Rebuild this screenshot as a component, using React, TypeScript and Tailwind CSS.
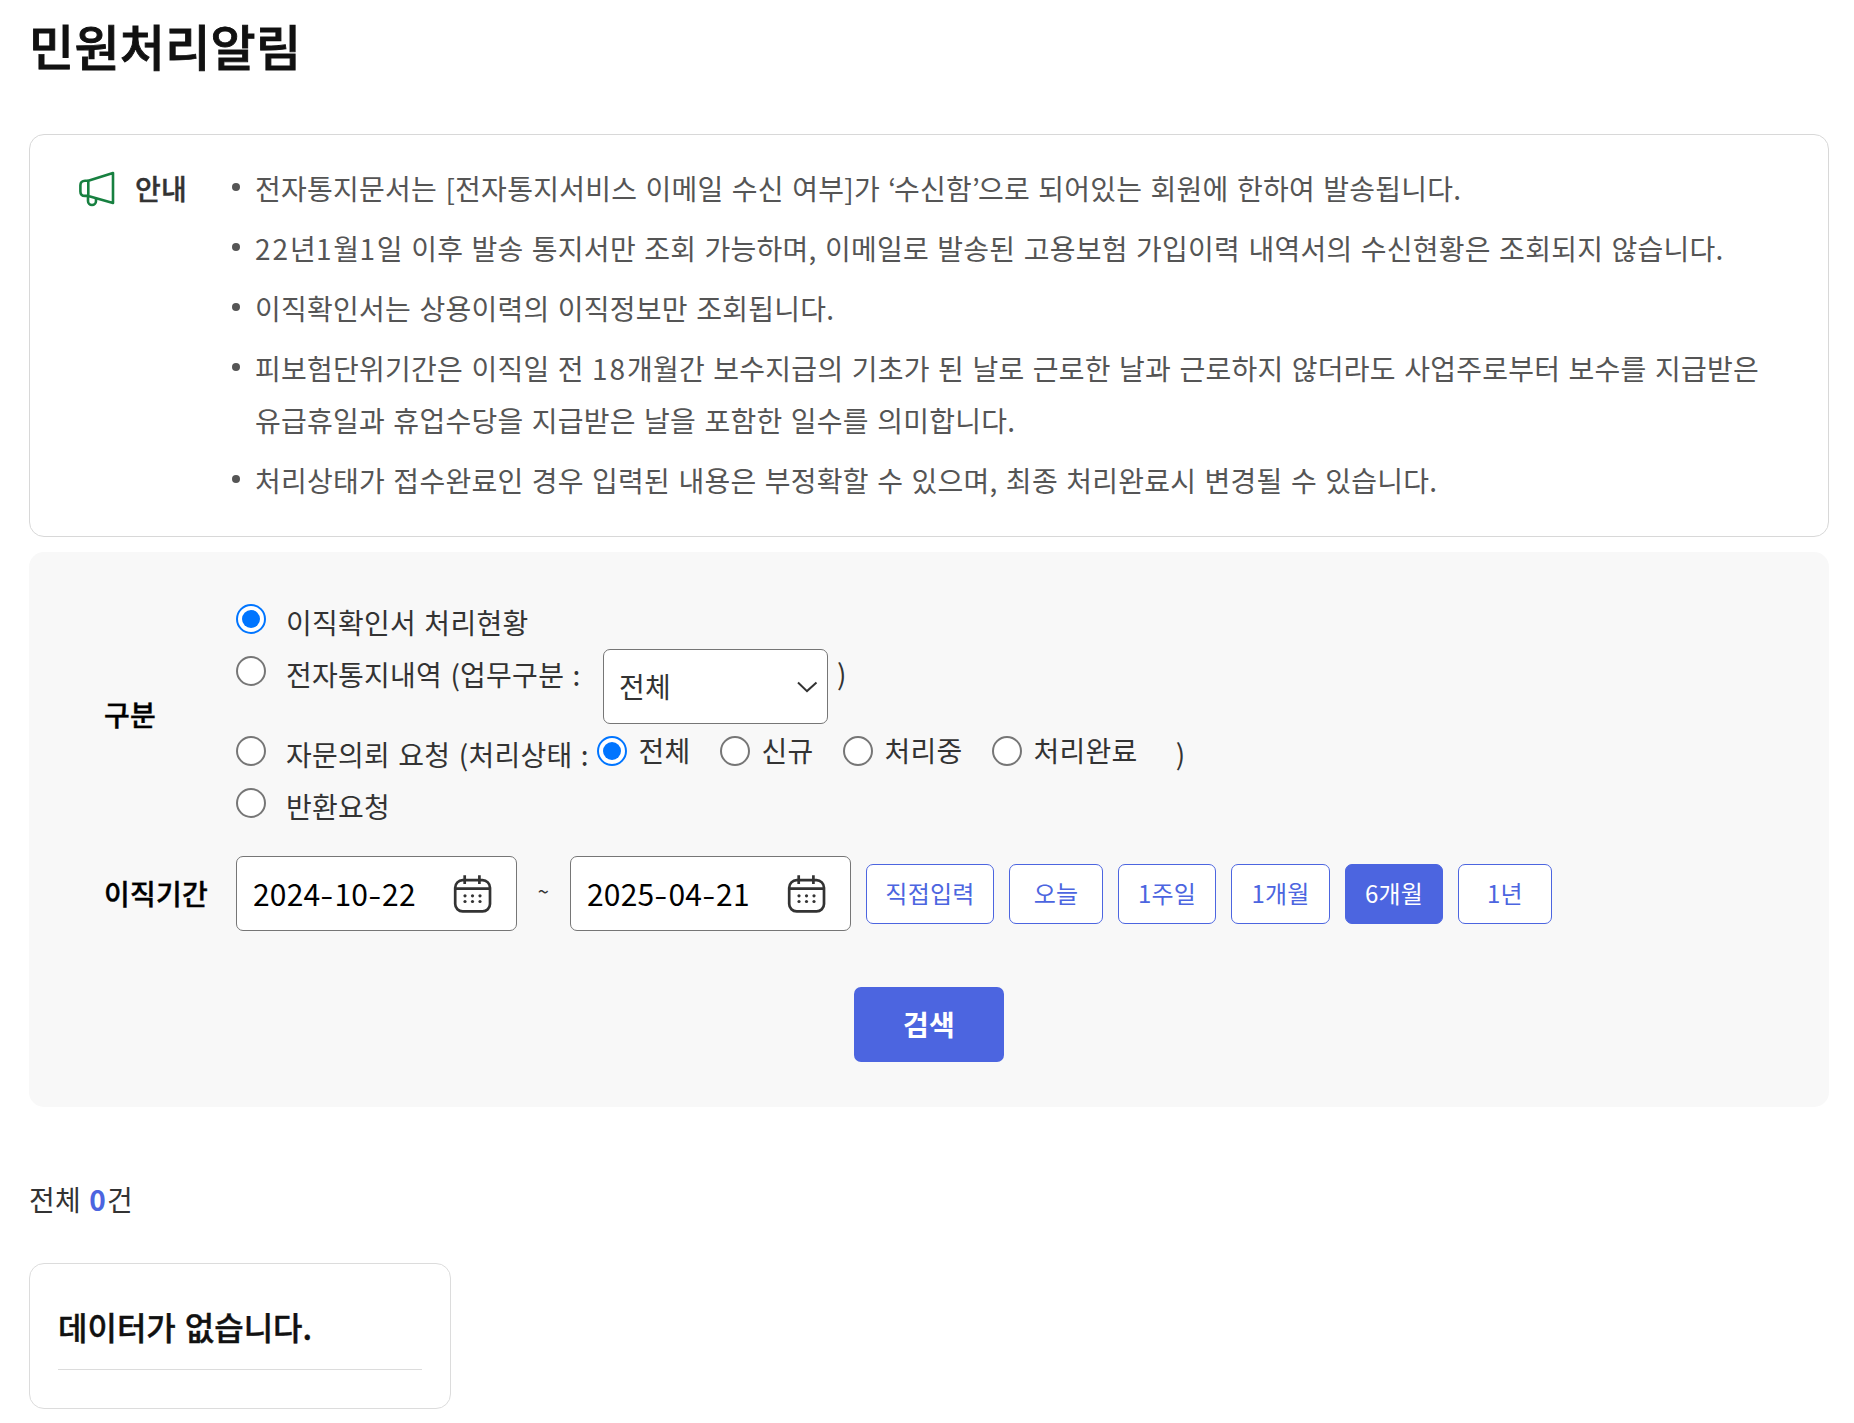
import React, { useState } from 'react';
import clsx from 'clsx';

const NOTICES = [
  '전자통지문서는 [전자통지서비스 이메일 수신 여부]가 ‘수신함’으로 되어있는 회원에 한하여 발송됩니다.',
  '22년1월1일 이후 발송 통지서만 조회 가능하며, 이메일로 발송된 고용보험 가입이력 내역서의 수신현황은 조회되지 않습니다.',
  '이직확인서는 상용이력의 이직정보만 조회됩니다.',
  '피보험단위기간은 이직일 전 18개월간 보수지급의 기초가 된 날로 근로한 날과 근로하지 않더라도 사업주로부터 보수를 지급받은 유급휴일과 휴업수당을 지급받은 날을 포함한 일수를 의미합니다.',
  '처리상태가 접수완료인 경우 입력된 내용은 부정확할 수 있으며, 최종 처리완료시 변경될 수 있습니다.',
];

const PERIODS = [
  { label: '직접입력', width: 'w-[128px]' },
  { label: '오늘', width: 'w-[94px]' },
  { label: '1주일', width: 'w-[98px]' },
  { label: '1개월', width: 'w-[99px]' },
  { label: '6개월', width: 'w-[98px]' },
  { label: '1년', width: 'w-[94px]' },
];

const MegaphoneIcon: React.FC = () => (
  <svg width="36" height="36" viewBox="0 0 36 36" fill="none" stroke="#178040" strokeWidth="2.6" strokeLinejoin="round" className="shrink-0">
    <path d="M9.300 9.700 34 2v30L9.300 24.900Z" />
    <path d="M9.300 9.700H6C3.200 9.700 1.400 11.500 1.400 14.200v6.200C1.400 23.200 3.200 24.900 6 24.900h3.300" />
    <path d="M9 25v5a4 4 0 0 0 8 0V27.500" />
  </svg>
);

const CalendarIcon: React.FC = () => (
  <svg width="40" height="40" viewBox="0 0 40 40" fill="none" stroke="#333" strokeWidth="2.700">
    <rect x="3.200" y="6.200" width="34.800" height="31.200" rx="7.500" />
    <path d="M3.200 14.600H38M12.700 1.300V10M27.400 1.300V10" />
    <g fill="#333" stroke="none">
      <circle cx="13" cy="21.800" r="1.600" />
      <circle cx="20.500" cy="21.800" r="1.600" />
      <circle cx="28" cy="21.800" r="1.600" />
      <circle cx="13" cy="27.500" r="1.600" />
      <circle cx="20.500" cy="27.500" r="1.600" />
      <circle cx="28" cy="27.500" r="1.600" />
    </g>
  </svg>
);

interface RadioProps {
  checked: boolean;
  onClick: () => void;
}

const Radio: React.FC<RadioProps> = ({ checked, onClick }) => (
  <button
    role="radio"
    aria-checked={checked}
    onClick={onClick}
    className={clsx(
      'flex size-[30px] shrink-0 items-center justify-center rounded-full border-2 bg-white',
      checked ? 'border-[#0075ff]' : 'border-[#767676]'
    )}
  >
    {checked && <span className="size-[18px] rounded-full bg-[#0075ff]" />}
  </button>
);

// digits run wider and quotes tighter than the hangul around them
const NoticeText: React.FC<{ text: string }> = ({ text }) => (
  <span>
    {text.split(/(\d+|[‘’])/).map((part, i) => {
      if (/^\d/.test(part)) return <span key={i} className="tracking-[1.9px]">{part}</span>;
      if (/^[‘’]/.test(part)) return <span key={i} className="tracking-[-2px]">{part}</span>;
      return part;
    })}
  </span>
);

const DateField: React.FC<{ value: string }> = ({ value }) => (
  <div className="flex h-[75px] w-[281px] items-center justify-between rounded-[7px] border border-[#767676] bg-white pr-6 pl-4">
    <span className="flex pb-0.5 text-[30px] tracking-[0.2px] text-black">
      {value.split('-').map((part, i) => (
        <React.Fragment key={i}>
          {i > 0 && <span className="w-[14px] scale-x-125 text-center">-</span>}
          <span>{part}</span>
        </React.Fragment>
      ))}
    </span>
    <CalendarIcon />
  </div>
);

const App: React.FC = () => {
  const [kind, setKind] = useState(0);
  const [status, setStatus] = useState('전체');
  const [period, setPeriod] = useState('6개월');

  return (
    <div className="h-[1423px] w-[1854px] overflow-hidden bg-white px-[29px] font-['Noto_Sans_CJK_KR',sans-serif] text-[28px] leading-[52px] tracking-[0.25px] text-[#333] [word-spacing:1.8px]">
      <h1 className="h-[134px] pt-[9px] text-[49px] leading-[72px] font-medium tracking-[0.3px] text-[#111] [-webkit-text-stroke:0.9px_#111]">민원처리알림</h1>

      <section className="flex h-[403px] w-[1800px] rounded-[15px] border border-[#d8d8d8] pt-[27px] pl-[49px]">
        <div className="flex h-[52px] w-[153px] items-center gap-5">
          <div className="pt-0.5"><MegaphoneIcon /></div>
          <strong className="font-medium [-webkit-text-stroke:0.4px_#333]">안내</strong>
        </div>
        <ul className="flex w-[1540px] flex-col gap-2 text-[#555]">
          {NOTICES.map(text => (
            <li key={text} className="flex break-keep">
              <span className="mt-[21px] mr-[15px] size-2 shrink-0 rounded-full bg-[#555]" />
              <NoticeText text={text} />
            </li>
          ))}
        </ul>
      </section>

      <section className="mt-[15px] h-[555px] w-[1800px] rounded-[15px] bg-[#f8f8f8] pt-11">
        <div className="flex pl-[75px]">
          <div className="flex w-[132px] items-center font-medium text-black [-webkit-text-stroke:0.4px_#000]">구분</div>
          <div className="flex flex-col">
            <div className="flex h-[52px] items-start">
              <div className="pt-2"><Radio checked={kind === 0} onClick={() => setKind(0)} /></div>
              <span className="ml-5">이직확인서 처리현황</span>
            </div>
            <div className="flex h-20 items-start">
              <div className="pt-2"><Radio checked={kind === 1} onClick={() => setKind(1)} /></div>
              <span className="ml-5 w-[317px]">전자통지내역 (업무구분 :</span>
              <div className="mt-px flex h-[75px] w-[225px] items-center justify-between rounded-[7px] border border-[#767676] bg-white pr-[9px] pl-[15px]">
                <span className="pb-0.5">전체</span>
                <svg width="22" height="22" viewBox="0 0 22 22" fill="none" stroke="#333" strokeWidth="2">
                  <path d="m2 6.500 9 8.600L20.500 6.500" />
                </svg>
              </div>
              <span className="ml-[9px] -mt-px">)</span>
            </div>
            <div className="flex h-[52px] items-start">
              <div className="pt-2"><Radio checked={kind === 2} onClick={() => setKind(2)} /></div>
              <span className="ml-5 w-[311px]">자문의뢰 요청 (처리상태 :</span>
              <div className="-mt-[3px] flex h-[52px] items-center gap-[29.5px]">
                {['전체', '신규', '처리중', '처리완료'].map(label => (
                  <label key={label} className="flex items-center gap-[11.5px]">
                    <Radio checked={status === label} onClick={() => setStatus(label)} />
                    <span className="pb-[3px]">{label}</span>
                  </label>
                ))}
              </div>
              <span className="-mt-px ml-[38px]">)</span>
            </div>
            <div className="flex h-[52px] items-start">
              <div className="pt-2"><Radio checked={kind === 3} onClick={() => setKind(3)} /></div>
              <span className="ml-5">반환요청</span>
            </div>
          </div>
        </div>

        <div className="mt-6 flex h-[75px] items-center pl-[75px]">
          <div className="w-[132px] pb-0.5 font-medium text-black [-webkit-text-stroke:0.4px_#000]">이직기간</div>
          <DateField value="2024-10-22" />
          <span className="w-[53px] pb-1.5 text-center text-xl leading-[52px]">~</span>
          <DateField value="2025-04-21" />
          <div className="ml-[15px] flex gap-[15px]">
            {PERIODS.map(({ label, width }) => (
              <button
                key={label}
                onClick={() => setPeriod(label)}
                className={clsx(
                  'h-[60px] rounded-[7px] border border-[#4c65e0] pb-0.5 text-2xl',
                  width,
                  period === label ? 'bg-[#4c65e0] text-white' : 'bg-white text-[#4c65e0]'
                )}
              >
                {label}
              </button>
            ))}
          </div>
        </div>

        <button className="mx-auto mt-14 block h-[75px] w-[150px] rounded-[7px] bg-[#4c65e0] pb-0.5 font-bold text-white">검색</button>
      </section>

      <p className="mt-[66px]">
        전체 <b className="font-bold tracking-[1px] text-[#4c65e0]">0</b>건
      </p>

      <div className="mt-[38px] h-[146px] w-[422px] rounded-[15px] border border-[#dcdcdc] px-7 pt-[34px]">
        <p className="h-[72px] border-b border-[#dcdcdc] text-[32px] leading-[56px] font-medium tracking-normal text-[#111] [-webkit-text-stroke:0.4px_#111]">데이터가 없습니다.</p>
      </div>
    </div>
  );
};

export default App;
